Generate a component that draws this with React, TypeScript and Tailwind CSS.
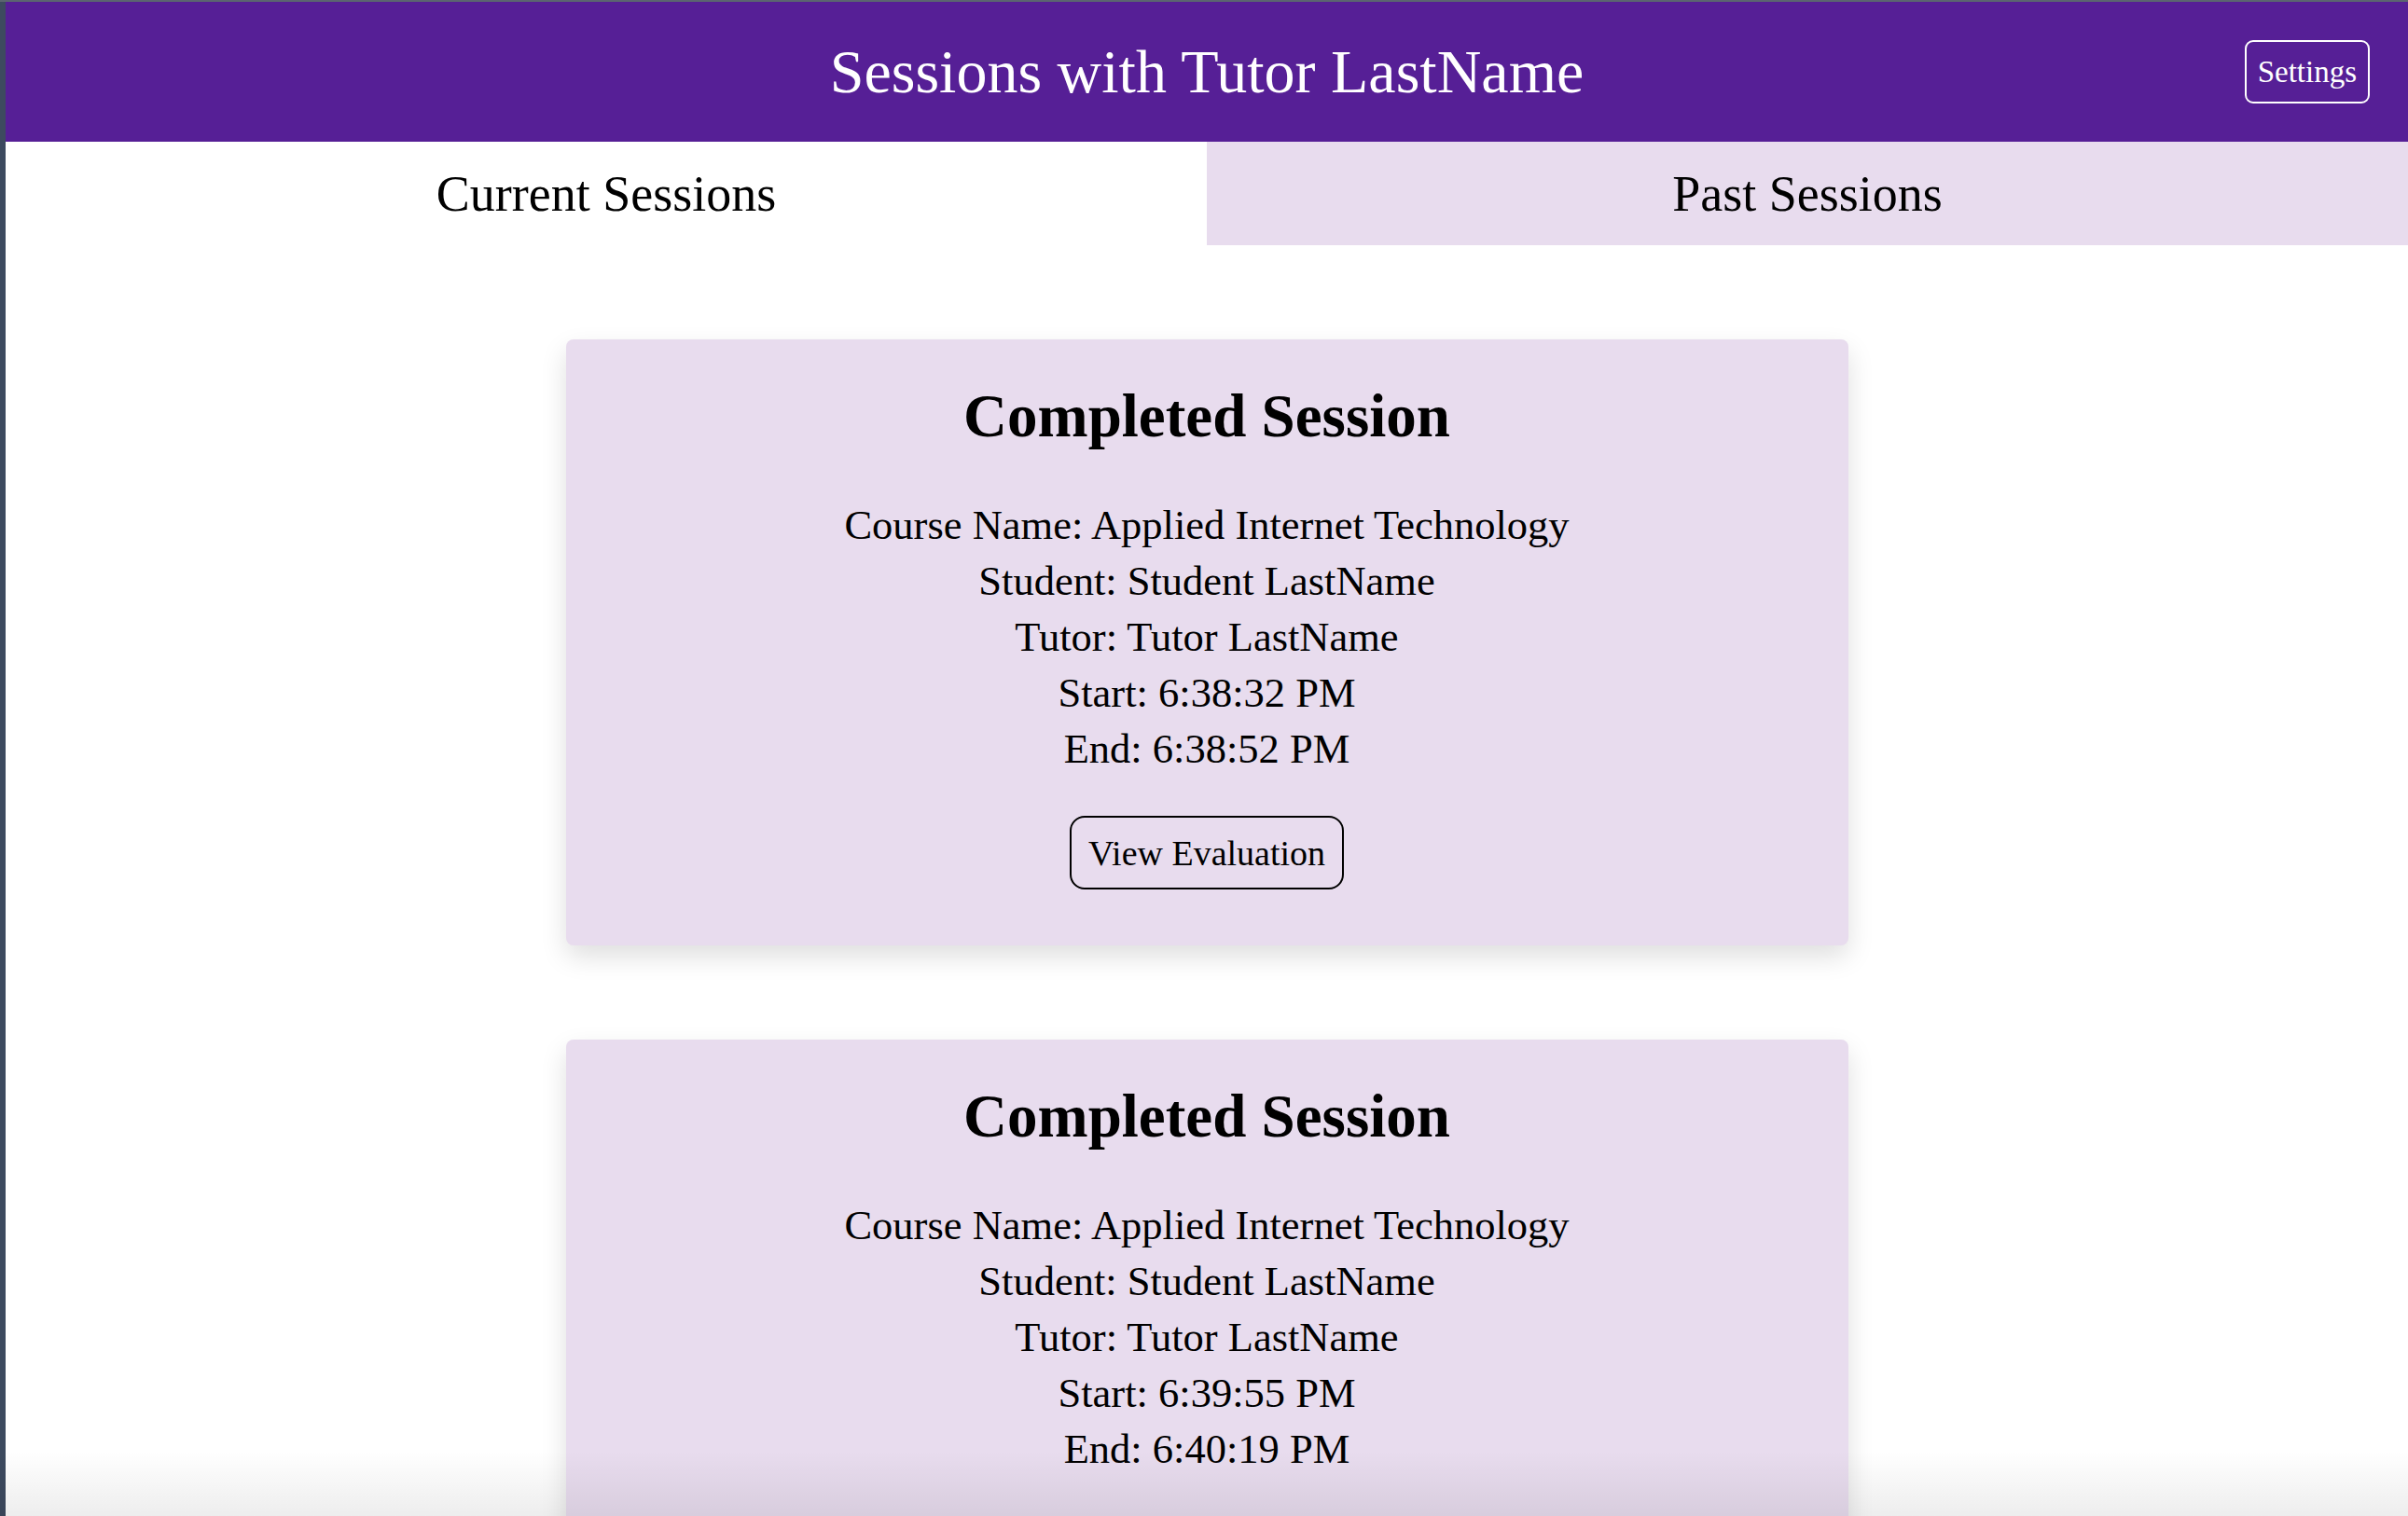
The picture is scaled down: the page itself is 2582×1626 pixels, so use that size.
import React from "react";

const serif = { fontFamily: '"Liberation Serif", "Times New Roman", serif' };

type Session = { start: string; end: string };

const sessions: Session[] = [
  { start: "6:38:32 PM", end: "6:38:52 PM" },
  { start: "6:39:55 PM", end: "6:40:19 PM" },
];

function SessionCard({ s }: { s: Session }) {
  return (
    <div className="w-[1375px] shrink-0 rounded-[8px] bg-[#e8dcee] pt-[50px] pb-[60px] flex flex-col items-center text-black shadow-[0_12px_28px_rgba(0,0,0,0.13)]">
      <h2 className="text-[65px] leading-none font-bold">Completed Session</h2>
      <div className="mt-[54px] flex flex-col items-center text-[44.5px] leading-[60px]">
        <p>Course Name: Applied Internet Technology</p>
        <p>Student: Student LastName</p>
        <p>Tutor: Tutor LastName</p>
        <p>Start: {s.start}</p>
        <p>End: {s.end}</p>
      </div>
      <button className="mt-[42px] h-[79px] px-[18px] border-2 border-black rounded-[16px] text-[38px] leading-none text-black bg-transparent">
        View Evaluation
      </button>
    </div>
  );
}

export default function App() {
  return (
    <div style={serif} className="relative w-[2582px] h-[1626px] overflow-hidden bg-white flex flex-col">
      <div className="h-[2px] w-full bg-[#5b6570] shrink-0" />
      <div className="flex flex-1 min-h-0">
        <div className="w-[6px] shrink-0 bg-[#3d4a5f]" />
        <main className="flex-1 min-w-0 flex flex-col">
          <header className="relative h-[150px] shrink-0 bg-[#561f96] flex items-center justify-center">
            <h1 className="text-[66px] leading-none text-white">Sessions with Tutor LastName</h1>
            <button className="absolute right-[41px] top-[41px] h-[68px] px-[12px] border-2 border-white rounded-[9px] text-[33px] leading-none text-white bg-transparent">
              Settings
            </button>
          </header>
          <nav className="flex h-[111px] shrink-0">
            <div className="flex-1 bg-white flex items-center justify-center text-[54px] leading-none text-black">
              Current Sessions
            </div>
            <div className="flex-1 bg-[#e8dcee] flex items-center justify-center text-[54px] leading-none text-black">
              Past Sessions
            </div>
          </nav>
          <section className="flex flex-col items-center pt-[101px] gap-[101px]">
            {sessions.map((s, i) => (
              <SessionCard key={i} s={s} />
            ))}
          </section>
        </main>
      </div>
      <div className="pointer-events-none absolute left-0 right-0 bottom-0 h-[70px] bg-gradient-to-b from-transparent to-black/[0.07]" />
    </div>
  );
}
